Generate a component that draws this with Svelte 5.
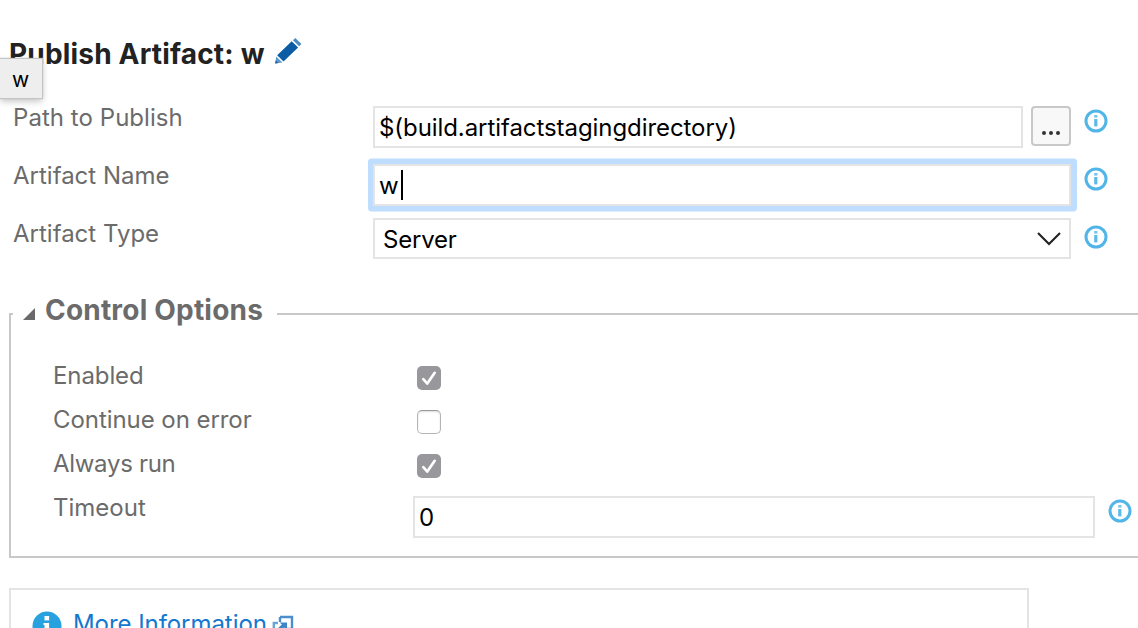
<script>
  const options = [
    { label: 'Enabled', checked: true },
    { label: 'Continue on error', checked: false, spacing: 'cont' },
    { label: 'Always run', checked: true, spacing: 'always' }
  ];
</script>

{#snippet info()}
  <svg class="info" viewBox="0 0 24 24" width="24" height="24">
    <circle cx="12" cy="12" r="10" fill="none" stroke="#51b5e7" stroke-width="3" />
    <rect x="10.2" y="6" width="3.2" height="2.6" fill="#74c4eb" />
    <rect x="10.2" y="10" width="3.2" height="7.4" fill="#5cb9e8" />
  </svg>
{/snippet}

<main>
  <header>
    <h1>Publish Artifact: w</h1>
    <svg class="pencil" viewBox="0 0 28 28" width="28" height="28">
      <path d="M1.2 26.6 2.3 19.5 8.4 25.5Z" fill="#5f98c8" />
      <path d="M3.2 18.2 17.7 4.2 24.1 10.4 9.5 24.5Z" fill="#0c5ca5" />
      <path d="M19 3.2 21.3 .9 27.4 7 25.2 9.3Z" fill="#4c8cc3" />
      <path d="M1.2 26.6 1.7 23.6 4.2 26.1Z" fill="#0c5ca5" />
    </svg>
    <div class="tooltip">w</div>
  </header>

  <section class="form">
    <div class="row">
      <span class="label path">Path to Publish</span>
      <div class="field"><span class="dir">$(build.artifactstagingdirectory)</span></div>
      <button aria-label="Browse"><i></i><i></i><i></i></button>
      {@render info()}
    </div>
    <div class="row">
      <span class="label name">Artifact Name</span>
      <div class="field focused"><span>w</span><b class="caret"></b></div>
      {@render info()}
    </div>
    <div class="row">
      <span class="label type">Artifact Type</span>
      <div class="field select">
        <span>Server</span>
        <svg viewBox="0 0 24 14" width="24" height="14"><path d="M1 1 12 12 23 1" fill="none" stroke="#222" stroke-width="2.1" /></svg>
      </div>
      {@render info()}
    </div>
  </section>

  <section class="group">
    <div class="legend">
      <i class="stub"></i>
      <svg viewBox="0 0 12 12" width="12" height="12"><path d="M12 0V12H0Z" fill="#6a6a6a" /></svg>
      <h2>Control Options</h2>
      <i class="line"></i>
    </div>
    <div class="options">
      {#each options as o}
        <div class="option">
          <span class="label {o.spacing ?? 'enabled'}">{o.label}</span>
          <span class="check" class:on={o.checked}>
            {#if o.checked}
              <svg viewBox="0 0 24 24" width="24" height="24"><path d="M6.3 13.2 10.3 17.6 17.7 6.8" fill="none" stroke="#fff" stroke-width="2.7" stroke-linecap="round" stroke-linejoin="round" /></svg>
            {/if}
          </span>
        </div>
      {/each}
      <div class="option timeout">
        <span class="label time">Timeout</span>
        <div class="field"><span>0</span></div>
        {@render info()}
      </div>
    </div>
  </section>

  <section class="more">
    <svg viewBox="0 0 30 30" width="30" height="30">
      <circle cx="15" cy="15" r="14.5" fill="#27a2df" />
      <rect x="12.5" y="5" width="4.6" height="4.4" fill="#fff" />
      <path d="M11.5 12H17.1V22H20V24H10V22H12.5V14H11.5Z" fill="#fff" />
    </svg>
    <a href="#more">More Information</a>
    <svg class="ext" viewBox="0 0 22 22" width="22" height="22">
      <path d="M8 2H20V14H15M8 2V7" fill="none" stroke="#4a8fcc" stroke-width="2.4" />
      <path d="M6 8H1.8V20H13.5V16" fill="none" stroke="#6ba4d6" stroke-width="2.4" />
      <path d="M7.5 7.5H15V15L12.7 12.6 8 17.3 4.9 14.2 9.9 9.6Z" fill="#3c85c6" />
    </svg>
  </section>
</main>

<style>
  :global(body) { margin: 0; background: #fff; overflow: hidden; }
  main {
    box-sizing: border-box; width: 1138px; height: 628px; overflow: hidden;
    font: 24px/30px Inter, "Liberation Sans", sans-serif; color: #000;
  }
  header { position: relative; height: 98px; box-sizing: border-box; padding: 36px 0 0 9px; display: flex; align-items: flex-start; }
  h1 { margin: 0; width: 265px; font-size: 28px; line-height: 36px; font-weight: 700; color: #222; letter-spacing: .18px; white-space: nowrap; }
  .pencil { margin-top: 1px; }
  .tooltip {
    position: absolute; left: 0; top: 59px; width: 42px; height: 39px; box-sizing: border-box; padding-left: 12px;
    background: #eee; font-size: 21px; line-height: 41px; box-shadow: 0 0 1px 1px #c4c4c4, 0 3px 7px rgba(0,0,0,.25);
  }
  .row { display: flex; height: 58px; padding-left: 13px; align-items: flex-start; box-sizing: border-box; }
  .label { flex: none; color: #6b6b6b; white-space: nowrap; line-height: 30px; }
  .path { letter-spacing: .05px; }
  .cont { letter-spacing: -.06px; }
  .always { letter-spacing: -.3px; }
  .enabled { letter-spacing: -.1px; }
  .row .label { width: 360px; margin-top: 5px; }
  .field {
    box-sizing: border-box; width: 698px; height: 42px; margin-top: 8px; border: 2px solid #e4e4e4; padding: 2px 0 0 4px;
    display: flex; align-items: center; flex: none; background: #fff; letter-spacing: -.07px;
  }
  .row:first-child .field { width: 650px; }
  .focused { box-shadow: .5px 0 0 5.5px #bfdeff; border-radius: 1px; }
  .caret { width: 2px; height: 30px; background: #000; margin: -2px 0 0 2px; }
  .select { height: 41px; margin-top: 4px; padding: 2px 8px 0; justify-content: space-between; letter-spacing: -.2px; }
  .select svg { margin-top: -2px; }
  button {
    width: 40px; height: 40px; box-sizing: border-box; margin: 8px 0 0 8px; padding: 23px 0 0; border: 2px solid #c8c8c8;
    border-radius: 4px; background: #f8f8f8; display: flex; align-items: flex-start; justify-content: center; gap: 3px;
  }
  button i { width: 4px; height: 4px; border-radius: 50%; background: #333; }
  .info { flex: none; margin: 11px 0 0 13px; }

  .group { margin: 26px 0 0 9px; height: 260px; display: flex; flex-direction: column; }
  .legend { display: flex; height: 34px; align-items: flex-start; }
  .stub { width: 4px; height: 2px; background: #c8c8c8; margin-top: 15px; }
  .legend svg { margin: 10px 0 0 10px; }
  h2 { margin: -6px 0 0 10px; width: 232px; font-size: 28px; line-height: 36px; font-weight: 700; color: #6b6b6b; white-space: nowrap; letter-spacing: .2px; }
  .line { flex: 1; height: 2px; background: #c8c8c8; margin-top: 15px; }
  .options { flex: 1; margin-top: -19px; border: solid #c8c8c8; border-width: 0 0 2px 2px; padding: 43px 0 0 42px; }
  .option { display: flex; height: 44px; align-items: flex-start; }
  .option .label { width: 364px; margin-top: 5px; }
  .check { width: 24px; height: 24px; box-sizing: border-box; margin-top: 10px; border: 1px solid #b4b4b4; border-top-color: #999; border-radius: 5px; box-shadow: inset 0 1px 2px #ddd; }
  .check.on { border: 0; background: #98979c; box-shadow: none; }
  .check svg { display: block; }
  .timeout .label { width: 360px; }
  .timeout .field { width: 682px; }

  .more { box-sizing: border-box; margin: 30px 0 0 9px; width: 1020px; height: 70px; border: 2px solid #e4e4e4; padding: 21px 0 0 21px; display: flex; align-items: flex-start; }
  .more svg { flex: none; }
  .more a { color: #1478cf; text-decoration: none; margin: -2px 0 0 11px; width: 199px; white-space: nowrap; letter-spacing: -.06px; }
  .more .ext { margin-top: 4px; }
</style>
